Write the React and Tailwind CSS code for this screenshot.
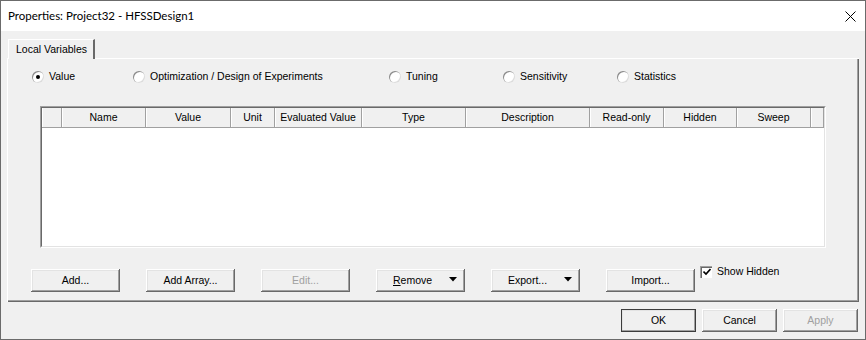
import React from "react";

const raised =
  "shadow-[inset_-1px_-1px_0_#696969,inset_1px_1px_0_#ffffff,inset_-2px_-2px_0_#a0a0a0,inset_2px_2px_0_#e3e3e3]";

const columns = [
  { label: "", w: "w-[20px]" },
  { label: "Name", w: "w-[84px]" },
  { label: "Value", w: "w-[85px]" },
  { label: "Unit", w: "w-[44px]" },
  { label: "Evaluated Value", w: "w-[87px]" },
  { label: "Type", w: "w-[104px]" },
  { label: "Description", w: "w-[124px]" },
  { label: "Read-only", w: "w-[74px]" },
  { label: "Hidden", w: "w-[73px]" },
  { label: "Sweep", w: "w-[74px]" },
  { label: "", w: "flex-1" },
];

const options = [
  { label: "Value", w: "w-[101px]", checked: true },
  { label: "Optimization / Design of Experiments", w: "w-[256px]" },
  { label: "Tuning", w: "w-[114px]" },
  { label: "Sensitivity", w: "w-[114px]" },
  { label: "Statistics", w: "w-[120px]" },
];

function Arrow() {
  return (
    <svg width="8" height="5" viewBox="0 0 8 5" className="mb-[2px]">
      <polygon points="0,0 8,0 4,4.5" fill="#000" />
    </svg>
  );
}

function Button({ children, disabled, dropdown, wide = "w-[89px]", isDefault }) {
  return (
    <div
      className={`${wide} h-[23px] flex items-center bg-[#f0f0f0] ${raised} ${
        isDefault ? "outline outline-1 outline-[#3c3c3c] -outline-offset-1" : ""
      } ${dropdown ? "pl-[17px] pr-[8px] justify-between" : "justify-center"} ${
        disabled ? "text-[#a0a0a0]" : "text-black"
      }`}
    >
      <span>{children}</span>
      {dropdown && <Arrow />}
    </div>
  );
}

function Radio({ label, w, checked }) {
  return (
    <div className={`${w} flex items-center gap-[5px]`}>
      <div className="w-[12px] h-[12px] rounded-full bg-white flex items-center justify-center shadow-[inset_1px_1px_0_#8a8a8a,inset_-1px_-1px_0_#dcdcdc]">
        {checked && <div className="w-[4px] h-[4px] rounded-full bg-black" />}
      </div>
      <span>{label}</span>
    </div>
  );
}

export default function App() {
  return (
    <div className="w-[866px] h-[340px] border border-[#6b6b6b] bg-[#f0f0f0] flex flex-col text-[10.5px] text-black font-['Liberation_Sans',Arial,sans-serif] overflow-hidden">
      <div className="h-[30px] shrink-0 bg-white flex items-center justify-between pl-[7px] pr-[9px]">
        <span className="text-[11.5px] font-['Lato',sans-serif]">Properties: Project32 - HFSSDesign1</span>
        <svg width="11" height="11" viewBox="0 0 11 11">
          <path d="M0.5 0.5 L10.5 10.5 M10.5 0.5 L0.5 10.5" stroke="#000" strokeWidth="1" />
        </svg>
      </div>

      <div className="flex flex-col px-[6px] pt-[8px]">
        <div className="flex pl-[1px]">
          <div className="relative z-10 -mb-px h-[20px] w-[87px] flex items-center pl-[7px] bg-[#f0f0f0] border-l border-t border-white border-r-2 border-r-[#696969]">
            Local Variables
          </div>
        </div>

        <div className="h-[244px] flex flex-col border-t border-l border-white shadow-[inset_-1px_-1px_0_#696969,inset_-2px_-2px_0_#a0a0a0]">
          <div className="flex h-[12px] mt-[12px] pl-[24px]">
            {options.map((o) => (
              <Radio key={o.label} {...o} />
            ))}
          </div>

          <div className="ml-[32px] mt-[23px] w-[786px] h-[142px] shrink-0 border border-[#a0a0a0] border-r-white border-b-white">
            <div className="h-full flex flex-col bg-white border border-[#696969] border-r-[#e3e3e3] border-b-[#e3e3e3]">
              <div className="flex h-[20px] bg-[#f0f0f0]">
                {columns.map((c, i) => (
                  <div
                    key={i}
                    className={`${c.w} h-full flex items-center justify-center border-b border-[#a0a0a0] border-r border-r-[#a0a0a0] shadow-[inset_1px_0_0_#ffffff]`}
                  >
                    {c.label}
                  </div>
                ))}
              </div>
            </div>
          </div>

          <div className="flex items-start mt-[16px] pl-[23px]">
            <div className="flex gap-[26px] mt-[5px]">
              <Button>Add...</Button>
              <Button>Add Array...</Button>
              <Button disabled>Edit...</Button>
              <Button dropdown>
                <span className="underline">R</span>emove
              </Button>
              <Button dropdown>Export...</Button>
              <Button>Import...</Button>
            </div>
            <div className="flex items-center gap-[5px] ml-[5px]">
              <div className="w-[12px] h-[12px] bg-white flex items-center justify-center shadow-[inset_1px_1px_0_#a0a0a0,inset_2px_2px_0_#696969,inset_-1px_-1px_0_#ffffff]">
                <svg width="8" height="8" viewBox="0 0 8 8" className="ml-[1px] mt-[1px]">
                  <path d="M0.5 3.5 L3 6 L7.5 1" stroke="#000" strokeWidth="1.6" fill="none" />
                </svg>
              </div>
              <span>Show Hidden</span>
            </div>
          </div>
        </div>

        <div className="flex justify-end gap-[6px] mt-[7px] pr-[1px]">
          <Button wide="w-[75px]" isDefault>OK</Button>
          <Button wide="w-[75px]">Cancel</Button>
          <Button wide="w-[75px]" disabled>Apply</Button>
        </div>
      </div>
    </div>
  );
}
